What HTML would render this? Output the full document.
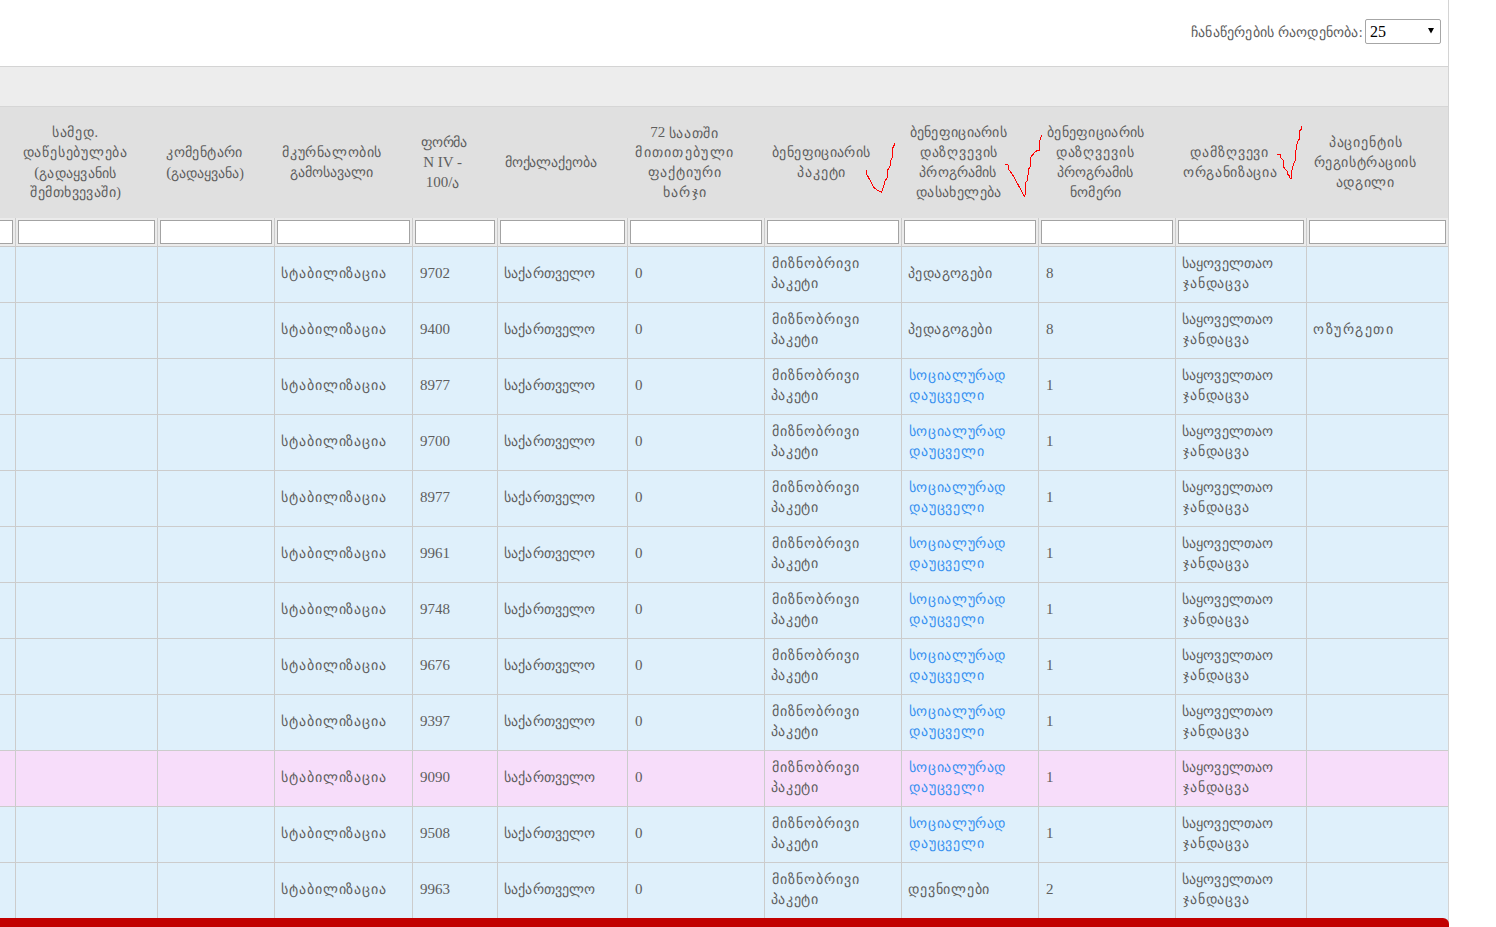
<!DOCTYPE html><html><head><meta charset="utf-8"><title>table</title><style>
*{margin:0;padding:0;box-sizing:border-box}
html,body{width:1496px;height:927px;overflow:hidden;background:#fff}
body{position:relative;font-family:"Liberation Serif",serif;color:#5e5e5e}
.a{position:absolute}
.hc{position:absolute;text-align:center;white-space:nowrap;color:#5e5e5e}
.bc{position:absolute;white-space:nowrap}
.ln{position:relative;height:20px;line-height:20px;font-size:14px}
.g{position:relative;top:0px;font-size:14px;letter-spacing:0.7px}
.l{position:relative;top:-1px;font-size:15px}
.inp{position:absolute;top:220px;height:24px;background:#fff;border:1px solid #a3a3a3}
.lnk{color:#3790f0}
</style></head><body>
<div class="a" style="left:1191px;top:20px;line-height:24px;white-space:nowrap"><span class="g" style="font-size:14px;letter-spacing:0.2px;top:0">ჩანაწერების რაოდენობა:</span></div>
<div class="a" style="left:1365px;top:19px;width:76px;height:25px;border:1px solid #a6a6a6;border-radius:2px;background:#fff"></div>
<div class="a" style="left:1370px;top:19px;line-height:25px;font-size:16px;color:#000">25</div>
<svg class="a" style="left:1428px;top:28px" width="6" height="6"><polygon points="0,0 6,0 3,5.5" fill="#000"/></svg>
<div class="a" style="left:0;top:66px;width:1449px;height:1px;background:#d4d4d4"></div>
<div class="a" style="left:0;top:67px;width:1448px;height:39px;background:#ededed"></div>
<div class="a" style="left:0;top:106px;width:1449px;height:1px;background:#d6d6d6"></div>
<div class="a" style="left:0;top:107px;width:1448px;height:111px;background:#e0e0e0"></div>
<div class="a" style="left:0;top:218px;width:1448px;height:28px;background:#ebebeb"></div>
<div class="a" style="left:0;top:246px;width:1448px;height:1px;background:#c8c8c8"></div>
<div class="a" style="left:0;top:247px;width:1448px;height:55px;background:#dff0fb"></div>
<div class="a" style="left:0;top:302px;width:1448px;height:1px;background:#cccccc"></div>
<div class="a" style="left:0;top:303px;width:1448px;height:55px;background:#dff0fb"></div>
<div class="a" style="left:0;top:358px;width:1448px;height:1px;background:#cccccc"></div>
<div class="a" style="left:0;top:359px;width:1448px;height:55px;background:#dff0fb"></div>
<div class="a" style="left:0;top:414px;width:1448px;height:1px;background:#cccccc"></div>
<div class="a" style="left:0;top:415px;width:1448px;height:55px;background:#dff0fb"></div>
<div class="a" style="left:0;top:470px;width:1448px;height:1px;background:#cccccc"></div>
<div class="a" style="left:0;top:471px;width:1448px;height:55px;background:#dff0fb"></div>
<div class="a" style="left:0;top:526px;width:1448px;height:1px;background:#cccccc"></div>
<div class="a" style="left:0;top:527px;width:1448px;height:55px;background:#dff0fb"></div>
<div class="a" style="left:0;top:582px;width:1448px;height:1px;background:#cccccc"></div>
<div class="a" style="left:0;top:583px;width:1448px;height:55px;background:#dff0fb"></div>
<div class="a" style="left:0;top:638px;width:1448px;height:1px;background:#cccccc"></div>
<div class="a" style="left:0;top:639px;width:1448px;height:55px;background:#dff0fb"></div>
<div class="a" style="left:0;top:694px;width:1448px;height:1px;background:#cccccc"></div>
<div class="a" style="left:0;top:695px;width:1448px;height:55px;background:#dff0fb"></div>
<div class="a" style="left:0;top:750px;width:1448px;height:1px;background:#cccccc"></div>
<div class="a" style="left:0;top:751px;width:1448px;height:55px;background:#f7ddfa"></div>
<div class="a" style="left:0;top:806px;width:1448px;height:1px;background:#cccccc"></div>
<div class="a" style="left:0;top:807px;width:1448px;height:55px;background:#dff0fb"></div>
<div class="a" style="left:0;top:862px;width:1448px;height:1px;background:#cccccc"></div>
<div class="a" style="left:0;top:863px;width:1448px;height:55px;background:#dff0fb"></div>
<div class="a" style="left:0;top:918px;width:1448px;height:1px;background:#cccccc"></div>
<div class="a" style="left:1448px;top:0;width:1px;height:927px;background:#d4d4d4"></div>
<div class="a" style="left:15px;top:218px;width:1px;height:700px;background:#cccccc"></div>
<div class="a" style="left:157px;top:218px;width:1px;height:700px;background:#cccccc"></div>
<div class="a" style="left:274px;top:218px;width:1px;height:700px;background:#cccccc"></div>
<div class="a" style="left:412px;top:218px;width:1px;height:700px;background:#cccccc"></div>
<div class="a" style="left:497px;top:218px;width:1px;height:700px;background:#cccccc"></div>
<div class="a" style="left:627px;top:218px;width:1px;height:700px;background:#cccccc"></div>
<div class="a" style="left:764px;top:218px;width:1px;height:700px;background:#cccccc"></div>
<div class="a" style="left:901px;top:218px;width:1px;height:700px;background:#cccccc"></div>
<div class="a" style="left:1038px;top:218px;width:1px;height:700px;background:#cccccc"></div>
<div class="a" style="left:1175px;top:218px;width:1px;height:700px;background:#cccccc"></div>
<div class="a" style="left:1306px;top:218px;width:1px;height:700px;background:#cccccc"></div>
<div class="inp" style="left:-100px;width:113px"></div>
<div class="inp" style="left:18px;width:137px"></div>
<div class="inp" style="left:160px;width:112px"></div>
<div class="inp" style="left:277px;width:133px"></div>
<div class="inp" style="left:415px;width:80px"></div>
<div class="inp" style="left:500px;width:125px"></div>
<div class="inp" style="left:630px;width:132px"></div>
<div class="inp" style="left:767px;width:132px"></div>
<div class="inp" style="left:904px;width:132px"></div>
<div class="inp" style="left:1041px;width:132px"></div>
<div class="inp" style="left:1178px;width:126px"></div>
<div class="inp" style="left:1309px;width:137px"></div>
<div class="hc" style="left:5px;top:123px;width:141px"><div class="ln" style="left:-0.20px"><span class="g">სამედ.</span></div><div class="ln" style="left:-0.20px"><span class="g" style="letter-spacing:0.77px;">დაწესებულება</span></div><div class="ln" style="left:-0.10px"><span class="l">(</span><span class="g" style="letter-spacing:0.23px;">გადაყვანის</span></div><div class="ln" style="left:0.30px"><span class="g" style="letter-spacing:0.44px;">შემთხვევაში)</span></div></div>
<div class="hc" style="left:147px;top:143px;width:116px"><div class="ln" style="left:-0.40px"><span class="g" style="letter-spacing:0.40px;">კომენტარი</span></div><div class="ln"><span class="l">(</span><span class="g" style="letter-spacing:-0.00px;">გადაყვანა)</span></div></div>
<div class="hc" style="left:264px;top:143px;width:137px"><div class="ln" style="left:-0.30px"><span class="g" style="letter-spacing:0.60px;">მკურნალობის</span></div><div class="ln" style="left:-0.80px"><span class="g" style="letter-spacing:-0.01px;">გამოსავალი</span></div></div>
<div class="hc" style="left:402px;top:133px;width:84px"><div class="ln" style="left:-0.50px"><span class="g" style="letter-spacing:-0.45px;">ფორმა</span></div><div class="ln" style="left:-1.40px"><span class="l">N IV -</span></div><div class="ln" style="left:-1.00px"><span class="l">100/</span><span class="g">ა</span></div></div>
<div class="hc" style="left:487px;top:153px;width:129px"><div class="ln" style="left:-0.90px"><span class="g" style="letter-spacing:-0.12px;">მოქალაქეობა</span></div></div>
<div class="hc" style="left:617px;top:123px;width:136px"><div class="ln" style="left:-0.80px"><span class="l">72 </span><span class="g" style="letter-spacing:0.54px;">საათში</span></div><div class="ln" style="left:-0.30px"><span class="g" style="letter-spacing:1.30px;">მითითებული</span></div><div class="ln" style="left:-0.30px"><span class="g" style="letter-spacing:0.90px;">ფაქტიური</span></div><div class="ln" style="left:-0.10px"><span class="g" style="letter-spacing:1.35px;">ხარჯი</span></div></div>
<div class="hc" style="left:754px;top:143px;width:136px"><div class="ln" style="left:-0.70px"><span class="g" style="letter-spacing:0.39px;">ბენეფიციარის</span></div><div class="ln" style="left:-0.30px"><span class="g" style="letter-spacing:0.82px;">პაკეტი</span></div></div>
<div class="hc" style="left:891px;top:123px;width:136px"><div class="ln" style="left:-0.70px"><span class="g" style="letter-spacing:0.28px;">ბენეფიციარის</span></div><div class="ln"><span class="g" style="letter-spacing:0.85px;">დაზღვევის</span></div><div class="ln" style="left:-1.00px"><span class="g" style="letter-spacing:0.14px;">პროგრამის</span></div><div class="ln" style="left:-0.20px"><span class="g" style="letter-spacing:0.35px;">დასახელება</span></div></div>
<div class="hc" style="left:1028px;top:123px;width:136px"><div class="ln" style="left:-0.30px"><span class="g" style="letter-spacing:0.28px;">ბენეფიციარის</span></div><div class="ln" style="left:-0.80px"><span class="g" style="letter-spacing:0.90px;">დაზღვევის</span></div><div class="ln" style="left:-0.90px"><span class="g" style="letter-spacing:-0.08px;">პროგრამის</span></div><div class="ln" style="left:-0.40px"><span class="g" style="letter-spacing:0.30px;">ნომერი</span></div></div>
<div class="hc" style="left:1165px;top:143px;width:130px"><div class="ln" style="left:-0.30px"><span class="g" style="letter-spacing:0.88px;">დამზღვევი</span></div><div class="ln" style="left:0.30px"><span class="g" style="letter-spacing:0.68px;">ორგანიზაცია</span></div></div>
<div class="hc" style="left:1296px;top:133px;width:141px"><div class="ln" style="left:-0.80px"><span class="g" style="letter-spacing:0.90px;">პაციენტის</span></div><div class="ln" style="left:-1.40px"><span class="g" style="letter-spacing:0.59px;">რეგისტრაციის</span></div><div class="ln" style="left:-1.40px"><span class="g" style="letter-spacing:0.62px;">ადგილი</span></div></div>
<div class="bc" style="left:275px;top:264px;width:137px;padding-left:7px"><div class="ln" style="left:-1.00px"><span class="g" style="letter-spacing:0.92px;">სტაბილიზაცია</span></div></div>
<div class="bc" style="left:413px;top:264px;width:84px;padding-left:7px"><div class="ln"><span class="l">9702</span></div></div>
<div class="bc" style="left:498px;top:264px;width:129px;padding-left:7px"><div class="ln" style="left:-1.00px"><span class="g" style="letter-spacing:0.14px;">საქართველო</span></div></div>
<div class="bc" style="left:628px;top:264px;width:136px;padding-left:7px"><div class="ln"><span class="l">0</span></div></div>
<div class="bc" style="left:765px;top:254px;width:136px;padding-left:7px"><div class="ln" style="left:-0.40px"><span class="g" style="letter-spacing:0.99px;">მიზნობრივი</span></div><div class="ln" style="left:-1.20px"><span class="g" style="letter-spacing:0.66px;">პაკეტი</span></div></div>
<div class="bc" style="left:1039px;top:264px;width:136px;padding-left:7px"><div class="ln"><span class="l">8</span></div></div>
<div class="bc" style="left:1176px;top:254px;width:130px;padding-left:7px"><div class="ln" style="left:-1.00px"><span class="g" style="letter-spacing:0.12px;">საყოველთაო</span></div><div class="ln"><span class="g" style="letter-spacing:0.84px;">ჯანდაცვა</span></div></div>
<div class="bc" style="left:902px;top:264px;width:136px;padding-left:7px"><div class="ln" style="left:-1.00px"><span class="g" style="letter-spacing:0.39px;">პედაგოგები</span></div></div>
<div class="bc" style="left:275px;top:320px;width:137px;padding-left:7px"><div class="ln" style="left:-1.00px"><span class="g" style="letter-spacing:0.92px;">სტაბილიზაცია</span></div></div>
<div class="bc" style="left:413px;top:320px;width:84px;padding-left:7px"><div class="ln"><span class="l">9400</span></div></div>
<div class="bc" style="left:498px;top:320px;width:129px;padding-left:7px"><div class="ln" style="left:-1.00px"><span class="g" style="letter-spacing:0.14px;">საქართველო</span></div></div>
<div class="bc" style="left:628px;top:320px;width:136px;padding-left:7px"><div class="ln"><span class="l">0</span></div></div>
<div class="bc" style="left:765px;top:310px;width:136px;padding-left:7px"><div class="ln" style="left:-0.40px"><span class="g" style="letter-spacing:0.99px;">მიზნობრივი</span></div><div class="ln" style="left:-1.20px"><span class="g" style="letter-spacing:0.66px;">პაკეტი</span></div></div>
<div class="bc" style="left:1039px;top:320px;width:136px;padding-left:7px"><div class="ln"><span class="l">8</span></div></div>
<div class="bc" style="left:1176px;top:310px;width:130px;padding-left:7px"><div class="ln" style="left:-1.00px"><span class="g" style="letter-spacing:0.12px;">საყოველთაო</span></div><div class="ln"><span class="g" style="letter-spacing:0.84px;">ჯანდაცვა</span></div></div>
<div class="bc" style="left:902px;top:320px;width:136px;padding-left:7px"><div class="ln" style="left:-1.00px"><span class="g" style="letter-spacing:0.39px;">პედაგოგები</span></div></div>
<div class="bc" style="left:1307px;top:320px;width:141px;padding-left:7px"><div class="ln" style="left:-0.80px"><span class="g" style="letter-spacing:1.50px;">ოზურგეთი</span></div></div>
<div class="bc" style="left:275px;top:376px;width:137px;padding-left:7px"><div class="ln" style="left:-1.00px"><span class="g" style="letter-spacing:0.92px;">სტაბილიზაცია</span></div></div>
<div class="bc" style="left:413px;top:376px;width:84px;padding-left:7px"><div class="ln"><span class="l">8977</span></div></div>
<div class="bc" style="left:498px;top:376px;width:129px;padding-left:7px"><div class="ln" style="left:-1.00px"><span class="g" style="letter-spacing:0.14px;">საქართველო</span></div></div>
<div class="bc" style="left:628px;top:376px;width:136px;padding-left:7px"><div class="ln"><span class="l">0</span></div></div>
<div class="bc" style="left:765px;top:366px;width:136px;padding-left:7px"><div class="ln" style="left:-0.40px"><span class="g" style="letter-spacing:0.99px;">მიზნობრივი</span></div><div class="ln" style="left:-1.20px"><span class="g" style="letter-spacing:0.66px;">პაკეტი</span></div></div>
<div class="bc" style="left:1039px;top:376px;width:136px;padding-left:7px"><div class="ln"><span class="l">1</span></div></div>
<div class="bc" style="left:1176px;top:366px;width:130px;padding-left:7px"><div class="ln" style="left:-1.00px"><span class="g" style="letter-spacing:0.12px;">საყოველთაო</span></div><div class="ln"><span class="g" style="letter-spacing:0.84px;">ჯანდაცვა</span></div></div>
<div class="bc lnk" style="left:902px;top:366px;width:136px;padding-left:7px"><div class="ln" style="left:-0.20px"><span class="g" style="letter-spacing:0.62px;">სოციალურად</span></div><div class="ln" style="left:-0.20px"><span class="g" style="letter-spacing:0.90px;">დაუცველი</span></div></div>
<div class="bc" style="left:275px;top:432px;width:137px;padding-left:7px"><div class="ln" style="left:-1.00px"><span class="g" style="letter-spacing:0.92px;">სტაბილიზაცია</span></div></div>
<div class="bc" style="left:413px;top:432px;width:84px;padding-left:7px"><div class="ln"><span class="l">9700</span></div></div>
<div class="bc" style="left:498px;top:432px;width:129px;padding-left:7px"><div class="ln" style="left:-1.00px"><span class="g" style="letter-spacing:0.14px;">საქართველო</span></div></div>
<div class="bc" style="left:628px;top:432px;width:136px;padding-left:7px"><div class="ln"><span class="l">0</span></div></div>
<div class="bc" style="left:765px;top:422px;width:136px;padding-left:7px"><div class="ln" style="left:-0.40px"><span class="g" style="letter-spacing:0.99px;">მიზნობრივი</span></div><div class="ln" style="left:-1.20px"><span class="g" style="letter-spacing:0.66px;">პაკეტი</span></div></div>
<div class="bc" style="left:1039px;top:432px;width:136px;padding-left:7px"><div class="ln"><span class="l">1</span></div></div>
<div class="bc" style="left:1176px;top:422px;width:130px;padding-left:7px"><div class="ln" style="left:-1.00px"><span class="g" style="letter-spacing:0.12px;">საყოველთაო</span></div><div class="ln"><span class="g" style="letter-spacing:0.84px;">ჯანდაცვა</span></div></div>
<div class="bc lnk" style="left:902px;top:422px;width:136px;padding-left:7px"><div class="ln" style="left:-0.20px"><span class="g" style="letter-spacing:0.62px;">სოციალურად</span></div><div class="ln" style="left:-0.20px"><span class="g" style="letter-spacing:0.90px;">დაუცველი</span></div></div>
<div class="bc" style="left:275px;top:488px;width:137px;padding-left:7px"><div class="ln" style="left:-1.00px"><span class="g" style="letter-spacing:0.92px;">სტაბილიზაცია</span></div></div>
<div class="bc" style="left:413px;top:488px;width:84px;padding-left:7px"><div class="ln"><span class="l">8977</span></div></div>
<div class="bc" style="left:498px;top:488px;width:129px;padding-left:7px"><div class="ln" style="left:-1.00px"><span class="g" style="letter-spacing:0.14px;">საქართველო</span></div></div>
<div class="bc" style="left:628px;top:488px;width:136px;padding-left:7px"><div class="ln"><span class="l">0</span></div></div>
<div class="bc" style="left:765px;top:478px;width:136px;padding-left:7px"><div class="ln" style="left:-0.40px"><span class="g" style="letter-spacing:0.99px;">მიზნობრივი</span></div><div class="ln" style="left:-1.20px"><span class="g" style="letter-spacing:0.66px;">პაკეტი</span></div></div>
<div class="bc" style="left:1039px;top:488px;width:136px;padding-left:7px"><div class="ln"><span class="l">1</span></div></div>
<div class="bc" style="left:1176px;top:478px;width:130px;padding-left:7px"><div class="ln" style="left:-1.00px"><span class="g" style="letter-spacing:0.12px;">საყოველთაო</span></div><div class="ln"><span class="g" style="letter-spacing:0.84px;">ჯანდაცვა</span></div></div>
<div class="bc lnk" style="left:902px;top:478px;width:136px;padding-left:7px"><div class="ln" style="left:-0.20px"><span class="g" style="letter-spacing:0.62px;">სოციალურად</span></div><div class="ln" style="left:-0.20px"><span class="g" style="letter-spacing:0.90px;">დაუცველი</span></div></div>
<div class="bc" style="left:275px;top:544px;width:137px;padding-left:7px"><div class="ln" style="left:-1.00px"><span class="g" style="letter-spacing:0.92px;">სტაბილიზაცია</span></div></div>
<div class="bc" style="left:413px;top:544px;width:84px;padding-left:7px"><div class="ln"><span class="l">9961</span></div></div>
<div class="bc" style="left:498px;top:544px;width:129px;padding-left:7px"><div class="ln" style="left:-1.00px"><span class="g" style="letter-spacing:0.14px;">საქართველო</span></div></div>
<div class="bc" style="left:628px;top:544px;width:136px;padding-left:7px"><div class="ln"><span class="l">0</span></div></div>
<div class="bc" style="left:765px;top:534px;width:136px;padding-left:7px"><div class="ln" style="left:-0.40px"><span class="g" style="letter-spacing:0.99px;">მიზნობრივი</span></div><div class="ln" style="left:-1.20px"><span class="g" style="letter-spacing:0.66px;">პაკეტი</span></div></div>
<div class="bc" style="left:1039px;top:544px;width:136px;padding-left:7px"><div class="ln"><span class="l">1</span></div></div>
<div class="bc" style="left:1176px;top:534px;width:130px;padding-left:7px"><div class="ln" style="left:-1.00px"><span class="g" style="letter-spacing:0.12px;">საყოველთაო</span></div><div class="ln"><span class="g" style="letter-spacing:0.84px;">ჯანდაცვა</span></div></div>
<div class="bc lnk" style="left:902px;top:534px;width:136px;padding-left:7px"><div class="ln" style="left:-0.20px"><span class="g" style="letter-spacing:0.62px;">სოციალურად</span></div><div class="ln" style="left:-0.20px"><span class="g" style="letter-spacing:0.90px;">დაუცველი</span></div></div>
<div class="bc" style="left:275px;top:600px;width:137px;padding-left:7px"><div class="ln" style="left:-1.00px"><span class="g" style="letter-spacing:0.92px;">სტაბილიზაცია</span></div></div>
<div class="bc" style="left:413px;top:600px;width:84px;padding-left:7px"><div class="ln"><span class="l">9748</span></div></div>
<div class="bc" style="left:498px;top:600px;width:129px;padding-left:7px"><div class="ln" style="left:-1.00px"><span class="g" style="letter-spacing:0.14px;">საქართველო</span></div></div>
<div class="bc" style="left:628px;top:600px;width:136px;padding-left:7px"><div class="ln"><span class="l">0</span></div></div>
<div class="bc" style="left:765px;top:590px;width:136px;padding-left:7px"><div class="ln" style="left:-0.40px"><span class="g" style="letter-spacing:0.99px;">მიზნობრივი</span></div><div class="ln" style="left:-1.20px"><span class="g" style="letter-spacing:0.66px;">პაკეტი</span></div></div>
<div class="bc" style="left:1039px;top:600px;width:136px;padding-left:7px"><div class="ln"><span class="l">1</span></div></div>
<div class="bc" style="left:1176px;top:590px;width:130px;padding-left:7px"><div class="ln" style="left:-1.00px"><span class="g" style="letter-spacing:0.12px;">საყოველთაო</span></div><div class="ln"><span class="g" style="letter-spacing:0.84px;">ჯანდაცვა</span></div></div>
<div class="bc lnk" style="left:902px;top:590px;width:136px;padding-left:7px"><div class="ln" style="left:-0.20px"><span class="g" style="letter-spacing:0.62px;">სოციალურად</span></div><div class="ln" style="left:-0.20px"><span class="g" style="letter-spacing:0.90px;">დაუცველი</span></div></div>
<div class="bc" style="left:275px;top:656px;width:137px;padding-left:7px"><div class="ln" style="left:-1.00px"><span class="g" style="letter-spacing:0.92px;">სტაბილიზაცია</span></div></div>
<div class="bc" style="left:413px;top:656px;width:84px;padding-left:7px"><div class="ln"><span class="l">9676</span></div></div>
<div class="bc" style="left:498px;top:656px;width:129px;padding-left:7px"><div class="ln" style="left:-1.00px"><span class="g" style="letter-spacing:0.14px;">საქართველო</span></div></div>
<div class="bc" style="left:628px;top:656px;width:136px;padding-left:7px"><div class="ln"><span class="l">0</span></div></div>
<div class="bc" style="left:765px;top:646px;width:136px;padding-left:7px"><div class="ln" style="left:-0.40px"><span class="g" style="letter-spacing:0.99px;">მიზნობრივი</span></div><div class="ln" style="left:-1.20px"><span class="g" style="letter-spacing:0.66px;">პაკეტი</span></div></div>
<div class="bc" style="left:1039px;top:656px;width:136px;padding-left:7px"><div class="ln"><span class="l">1</span></div></div>
<div class="bc" style="left:1176px;top:646px;width:130px;padding-left:7px"><div class="ln" style="left:-1.00px"><span class="g" style="letter-spacing:0.12px;">საყოველთაო</span></div><div class="ln"><span class="g" style="letter-spacing:0.84px;">ჯანდაცვა</span></div></div>
<div class="bc lnk" style="left:902px;top:646px;width:136px;padding-left:7px"><div class="ln" style="left:-0.20px"><span class="g" style="letter-spacing:0.62px;">სოციალურად</span></div><div class="ln" style="left:-0.20px"><span class="g" style="letter-spacing:0.90px;">დაუცველი</span></div></div>
<div class="bc" style="left:275px;top:712px;width:137px;padding-left:7px"><div class="ln" style="left:-1.00px"><span class="g" style="letter-spacing:0.92px;">სტაბილიზაცია</span></div></div>
<div class="bc" style="left:413px;top:712px;width:84px;padding-left:7px"><div class="ln"><span class="l">9397</span></div></div>
<div class="bc" style="left:498px;top:712px;width:129px;padding-left:7px"><div class="ln" style="left:-1.00px"><span class="g" style="letter-spacing:0.14px;">საქართველო</span></div></div>
<div class="bc" style="left:628px;top:712px;width:136px;padding-left:7px"><div class="ln"><span class="l">0</span></div></div>
<div class="bc" style="left:765px;top:702px;width:136px;padding-left:7px"><div class="ln" style="left:-0.40px"><span class="g" style="letter-spacing:0.99px;">მიზნობრივი</span></div><div class="ln" style="left:-1.20px"><span class="g" style="letter-spacing:0.66px;">პაკეტი</span></div></div>
<div class="bc" style="left:1039px;top:712px;width:136px;padding-left:7px"><div class="ln"><span class="l">1</span></div></div>
<div class="bc" style="left:1176px;top:702px;width:130px;padding-left:7px"><div class="ln" style="left:-1.00px"><span class="g" style="letter-spacing:0.12px;">საყოველთაო</span></div><div class="ln"><span class="g" style="letter-spacing:0.84px;">ჯანდაცვა</span></div></div>
<div class="bc lnk" style="left:902px;top:702px;width:136px;padding-left:7px"><div class="ln" style="left:-0.20px"><span class="g" style="letter-spacing:0.62px;">სოციალურად</span></div><div class="ln" style="left:-0.20px"><span class="g" style="letter-spacing:0.90px;">დაუცველი</span></div></div>
<div class="bc" style="left:275px;top:768px;width:137px;padding-left:7px"><div class="ln" style="left:-1.00px"><span class="g" style="letter-spacing:0.92px;">სტაბილიზაცია</span></div></div>
<div class="bc" style="left:413px;top:768px;width:84px;padding-left:7px"><div class="ln"><span class="l">9090</span></div></div>
<div class="bc" style="left:498px;top:768px;width:129px;padding-left:7px"><div class="ln" style="left:-1.00px"><span class="g" style="letter-spacing:0.14px;">საქართველო</span></div></div>
<div class="bc" style="left:628px;top:768px;width:136px;padding-left:7px"><div class="ln"><span class="l">0</span></div></div>
<div class="bc" style="left:765px;top:758px;width:136px;padding-left:7px"><div class="ln" style="left:-0.40px"><span class="g" style="letter-spacing:0.99px;">მიზნობრივი</span></div><div class="ln" style="left:-1.20px"><span class="g" style="letter-spacing:0.66px;">პაკეტი</span></div></div>
<div class="bc" style="left:1039px;top:768px;width:136px;padding-left:7px"><div class="ln"><span class="l">1</span></div></div>
<div class="bc" style="left:1176px;top:758px;width:130px;padding-left:7px"><div class="ln" style="left:-1.00px"><span class="g" style="letter-spacing:0.12px;">საყოველთაო</span></div><div class="ln"><span class="g" style="letter-spacing:0.84px;">ჯანდაცვა</span></div></div>
<div class="bc lnk" style="left:902px;top:758px;width:136px;padding-left:7px"><div class="ln" style="left:-0.20px"><span class="g" style="letter-spacing:0.62px;">სოციალურად</span></div><div class="ln" style="left:-0.20px"><span class="g" style="letter-spacing:0.90px;">დაუცველი</span></div></div>
<div class="bc" style="left:275px;top:824px;width:137px;padding-left:7px"><div class="ln" style="left:-1.00px"><span class="g" style="letter-spacing:0.92px;">სტაბილიზაცია</span></div></div>
<div class="bc" style="left:413px;top:824px;width:84px;padding-left:7px"><div class="ln"><span class="l">9508</span></div></div>
<div class="bc" style="left:498px;top:824px;width:129px;padding-left:7px"><div class="ln" style="left:-1.00px"><span class="g" style="letter-spacing:0.14px;">საქართველო</span></div></div>
<div class="bc" style="left:628px;top:824px;width:136px;padding-left:7px"><div class="ln"><span class="l">0</span></div></div>
<div class="bc" style="left:765px;top:814px;width:136px;padding-left:7px"><div class="ln" style="left:-0.40px"><span class="g" style="letter-spacing:0.99px;">მიზნობრივი</span></div><div class="ln" style="left:-1.20px"><span class="g" style="letter-spacing:0.66px;">პაკეტი</span></div></div>
<div class="bc" style="left:1039px;top:824px;width:136px;padding-left:7px"><div class="ln"><span class="l">1</span></div></div>
<div class="bc" style="left:1176px;top:814px;width:130px;padding-left:7px"><div class="ln" style="left:-1.00px"><span class="g" style="letter-spacing:0.12px;">საყოველთაო</span></div><div class="ln"><span class="g" style="letter-spacing:0.84px;">ჯანდაცვა</span></div></div>
<div class="bc lnk" style="left:902px;top:814px;width:136px;padding-left:7px"><div class="ln" style="left:-0.20px"><span class="g" style="letter-spacing:0.62px;">სოციალურად</span></div><div class="ln" style="left:-0.20px"><span class="g" style="letter-spacing:0.90px;">დაუცველი</span></div></div>
<div class="bc" style="left:275px;top:880px;width:137px;padding-left:7px"><div class="ln" style="left:-1.00px"><span class="g" style="letter-spacing:0.92px;">სტაბილიზაცია</span></div></div>
<div class="bc" style="left:413px;top:880px;width:84px;padding-left:7px"><div class="ln"><span class="l">9963</span></div></div>
<div class="bc" style="left:498px;top:880px;width:129px;padding-left:7px"><div class="ln" style="left:-1.00px"><span class="g" style="letter-spacing:0.14px;">საქართველო</span></div></div>
<div class="bc" style="left:628px;top:880px;width:136px;padding-left:7px"><div class="ln"><span class="l">0</span></div></div>
<div class="bc" style="left:765px;top:870px;width:136px;padding-left:7px"><div class="ln" style="left:-0.40px"><span class="g" style="letter-spacing:0.99px;">მიზნობრივი</span></div><div class="ln" style="left:-1.20px"><span class="g" style="letter-spacing:0.66px;">პაკეტი</span></div></div>
<div class="bc" style="left:1039px;top:880px;width:136px;padding-left:7px"><div class="ln"><span class="l">2</span></div></div>
<div class="bc" style="left:1176px;top:870px;width:130px;padding-left:7px"><div class="ln" style="left:-1.00px"><span class="g" style="letter-spacing:0.12px;">საყოველთაო</span></div><div class="ln"><span class="g" style="letter-spacing:0.84px;">ჯანდაცვა</span></div></div>
<div class="bc" style="left:902px;top:880px;width:136px;padding-left:7px"><div class="ln" style="left:-0.80px"><span class="g" style="letter-spacing:0.77px;">დევნილები</span></div></div>
<div class="a" style="left:0;top:918px;width:1448px;height:9px;background:#dff0fb"></div>
<div class="a" style="left:-10px;top:918px;width:1459px;height:20px;background:#c20000;border-top-right-radius:6px"></div>
<svg class="a" style="left:0;top:0" width="1496" height="927"><polyline points="866.3,170.0 866.3,173.4 873.9,187.4 876.9,190.0 881.4,192.3 883.3,187.4 885.2,180.6 887.5,177.2 887.5,170.4 890.5,165.5 890.9,160.2 892.4,157.6 892.4,148.5 894.3,145.1 894.3,143.2" fill="none" stroke="#ff0000" stroke-width="1.0" stroke-linejoin="round" shape-rendering="crispEdges"/><polyline points="1005.4,164.3 1008.0,164.7 1008.8,169.5 1012.3,174.2 1024.4,196.2 1025.7,194.1 1025.7,182.4 1027.8,180.3 1028.2,169.9 1030.4,166.5 1030.8,157.0 1035.6,151.3 1039.5,150.0 1039.9,140.1 1041.6,135.4" fill="none" stroke="#ff0000" stroke-width="1.0" stroke-linejoin="round" shape-rendering="crispEdges"/><polyline points="1277.1,154.3 1280.1,154.7 1280.5,157.3 1283.1,160.3 1283.5,167.1 1287.3,171.3 1287.7,174.7 1289.5,175.4 1289.5,177.7 1291.4,178.4 1292.2,167.9 1295.2,160.3 1295.6,152.0 1297.5,141.4 1299.7,138.8 1299.7,130.5 1301.6,129.4 1301.6,126.2" fill="none" stroke="#ff0000" stroke-width="1.0" stroke-linejoin="round" shape-rendering="crispEdges"/></svg>
</body></html>
